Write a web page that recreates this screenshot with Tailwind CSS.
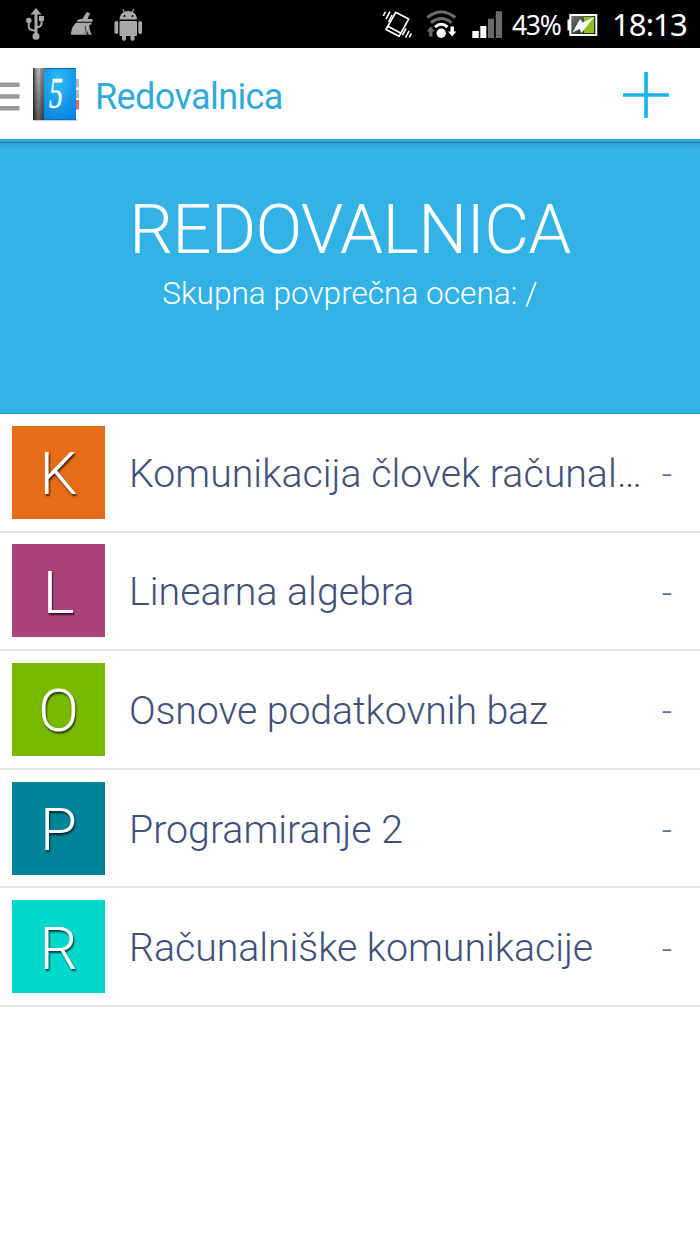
<!DOCTYPE html>
<html lang="sl">
<head>
<meta charset="UTF-8">
<meta name="viewport" content="width=device-width, initial-scale=1.0">
<title>Redovalnica</title>
<script src="https://cdn.jsdelivr.net/npm/@tailwindcss/browser@4"></script>
</head>
<body class="bg-white font-['Roboto',sans-serif] w-[700px] h-[1244px] overflow-hidden">

<!-- status bar -->
<div class="h-12 bg-black flex items-center justify-between text-white">
    <svg class="w-[160px] h-12" viewBox="0 0 160 48" fill="#a9a9a9">
        <!-- usb -->
        <path d="M36 8l5.500 6.500h-4V33h-3V14.500h-4z"/>
        <circle cx="36" cy="36.300" r="3.500"/>
        <circle cx="28.800" cy="20.500" r="2.800"/>
        <rect x="39" y="16" width="5" height="5"/>
        <path d="M28.800 21v5.500q0 4 7.200 4.300M41.500 20v4q0 3-5.500 3.300" fill="none" stroke="#a9a9a9" stroke-width="2"/>
        <!-- broom -->
        <path d="M71 34.700c.3-5.500 2-10 5.500-11.900h15v1.500l-2.200.7c0 3 .7 6.500 2.400 9.700h-3l-1.200-4-.5 4z"/>
        <path d="M76.500 21.800c1-2 3-3 6-3l4.300-6.800 3.200 1.200-2.400 5.800h5v2.800z"/>
        <path d="M85.300 25.500l.8 9" stroke="#000" stroke-width=".6"/>
        <!-- android -->
        <path d="M119.500 19.500c0-3.700 2-6 4.200-7.200L122.300 9.500l1-.5 1.600 2.700c2-.8 4.800-.8 6.800 0L133.300 9l1 .5-1.500 2.800c2.300 1.200 4.200 3.500 4.200 7.200z"/>
        <circle cx="124.500" cy="16" r="1" fill="#000"/>
        <circle cx="132.500" cy="16" r="1" fill="#000"/>
        <rect x="119.500" y="21" width="17.500" height="15" rx="1"/>
        <rect x="114.500" y="21" width="3.700" height="13" rx="1.800"/>
        <rect x="138.300" y="21" width="3.700" height="13" rx="1.800"/>
        <rect x="122" y="32" width="4" height="8.800" rx="1.800"/>
        <rect x="130.500" y="32" width="4" height="8.800" rx="1.800"/>
    </svg>
    <div class="flex items-center pr-3 font-['Noto_Sans',sans-serif]">
        <svg class="w-[132px] h-12" viewBox="380 0 132 48" fill="none">
            <!-- vibrate -->
            <path d="M395.700 12.300l13 6.800-9.700 17.200-13-6.800z" stroke="#fff" stroke-width="1.700" stroke-linejoin="round"/>
            <path d="M387.800 26.300l12.800 6.700M383.300 16l2-4.200M386 19l4-7.500M388.500 22l3.500-7M402.500 35l3.500-6.500M405.500 37.500l3.500-6.500M409.300 37.500l2-4.200" stroke="#fff" stroke-width="1.600"/>
            <!-- wifi -->
            <g stroke-width="3">
                <path d="M427.300 17.500q14-11 28 0M431 22.800q10.200-8.500 20.500 0" stroke="#6b6b6b"/>
                <path d="M435 27q6.200-5.500 12.500 0" stroke="#fff"/>
            </g>
            <circle cx="441.200" cy="33.300" r="4.700" fill="#fff"/>
            <path d="M430.800 26.500l4.200 5h-2.500V36.500h-3.400v-5h-2.500z" fill="#6b6b6b"/>
            <path d="M452.200 36.500l-4.200-5h2.500V26.500h3.400v5h2.500z" fill="#fff"/>
            <!-- signal -->
            <path d="M472.300 31h6.500v7h-6.500zM480.300 26h6v12h-6z" fill="#fff"/>
            <path d="M488 18.700h6V38h-6zM495.800 11.300h6.200V38h-6.200z" fill="#6b6b6b"/>
        </svg>
        <span class="w-[55px] pt-0.5 text-[26.500px] leading-none tracking-[-1.300px]">43%</span>
        <svg class="w-[45px] h-12" viewBox="567 0 45 48">
            <defs>
                <linearGradient id="bat" x1="0" y1="0" x2="1" y2="1">
                    <stop offset="0" stop-color="#777"/>
                    <stop offset="1" stop-color="#111"/>
                </linearGradient>
            </defs>
            <path d="M567.500 19.500h3v11h-3z" fill="#fff"/>
            <rect x="570.300" y="15" width="26" height="20" fill="url(#bat)" stroke="#fff" stroke-width="2"/>
            <path d="M584 17h10v16h-10z" fill="#8cc11f"/>
            <path d="M594 17l-11 5.500-3-3.500-7.500 13.500 7-3.500 2 4z" fill="#fff"/>
        </svg>
        <span class="w-[76px] text-[31px] leading-none tracking-[-0.900px] whitespace-nowrap">18:13</span>
    </div>
</div>

<!-- action bar -->
<header class="h-[91px] flex items-center">
    <svg class="w-[95px] h-[91px]" viewBox="0 48 95 91">
        <defs>
            <linearGradient id="spine">
                <stop offset="0" stop-color="#222"/>
                <stop offset=".2" stop-color="#888"/>
                <stop offset=".5" stop-color="#bbb"/>
                <stop offset=".7" stop-color="#888"/>
                <stop offset="1" stop-color="#777"/>
            </linearGradient>
            <linearGradient id="shade" x1="0" y1="0" x2="0" y2="1">
                <stop offset="0" stop-color="#000" stop-opacity="0"/>
                <stop offset="1" stop-color="#000" stop-opacity=".5"/>
            </linearGradient>
            <radialGradient id="cover" cx=".45" cy=".25" r=".8">
                <stop offset="0" stop-color="#2fbcf6"/>
                <stop offset="1" stop-color="#0584e4"/>
            </radialGradient>
        </defs>
        <path d="M0 82.500h19.500V87H0zM0 94.300h19.500v4.500H0zM0 106h19.500v4.600H0z" fill="#999"/>
        <path d="M75 79h4v8.500h-4zM75 90h4v8h-4z" fill="#b5b5b5"/>
        <path d="M75 100h4v9.500h-4z" fill="#f0616d"/>
        <rect x="33" y="119" width="44" height="2" fill="#ccc"/>
        <rect x="33" y="68" width="12" height="52" rx="1" fill="url(#spine)"/>
        <rect x="33" y="68" width="12" height="52" rx="1" fill="url(#shade)"/>
        <rect x="44" y="68" width="32" height="52" rx="1" fill="url(#cover)"/>
        <path d="M44 68.500h32M44 119.500h32" stroke="#0a6cba"/>
        <text transform="translate(49 108) scale(.62 1)" font-family="Liberation Serif, serif" font-style="italic" font-size="45" fill="#fff" stroke="#fff" stroke-width=".4">5</text>
    </svg>
    <h1 class="grow text-[36px] leading-none tracking-[-0.600px] text-[#33a9d8] pt-1.5">Redovalnica</h1>
    <svg class="w-[46px] h-[46px] mr-[31.500px] mt-0.5" viewBox="0 0 46 46" stroke="#1cb5e9" stroke-width="3.700">
        <path d="M0 23h46M23 0v46"/>
    </svg>
</header>

<!-- average -->
<section class="h-[275px] bg-[#33b3e5] border-b border-[#1aa5d8] text-white text-center">
    <div class="h-[3px] bg-[#2aafe0]"></div>
    <div class="h-px bg-[#2385aa]"></div>
    <div class="h-2 bg-linear-to-b from-[#2fa3d0] to-[#33b3e5]"></div>
    <h2 class="pt-[44px] text-[69px] leading-[69px] tracking-[-0.700px] font-light">REDOVALNICA</h2>
    <p class="pt-[12px] text-[31.600px] leading-[36px] font-light">Skupna povprečna ocena: /</p>
</section>

<!-- subjects -->
<ul class="text-[39.300px] font-light text-[#3f5079] whitespace-nowrap">
    <li class="h-[118.600px] border-b-2 border-[#e2e2e2] flex items-center px-3">
        <span class="size-[93px] pt-1 bg-[#e66c18] text-white text-[60px] flex items-center justify-center text-shadow-[1px_2px_2px_rgb(0_0_0/0.7)]">K</span>
        <span class="ml-6 pt-1">Komunikacija človek računal…</span>
        <span class="ml-auto pr-4 pt-1.5 text-[36px] text-[#66738f]">-</span>
    </li>
    <li class="h-[118.600px] border-b-2 border-[#e2e2e2] flex items-center px-3">
        <span class="size-[93px] pt-1 bg-[#a94278] text-white text-[60px] flex items-center justify-center text-shadow-[1px_2px_2px_rgb(0_0_0/0.7)]">L</span>
        <span class="ml-6 pt-1">Linearna algebra</span>
        <span class="ml-auto pr-4 pt-1.5 text-[36px] text-[#66738f]">-</span>
    </li>
    <li class="h-[118.600px] border-b-2 border-[#e2e2e2] flex items-center px-3">
        <span class="size-[93px] pt-1 bg-[#78b900] text-white text-[60px] flex items-center justify-center text-shadow-[1px_2px_2px_rgb(0_0_0/0.7)]">O</span>
        <span class="ml-6 pt-1 tracking-[-0.100px]">Osnove podatkovnih baz</span>
        <span class="ml-auto pr-4 pt-1.5 text-[36px] text-[#66738f]">-</span>
    </li>
    <li class="h-[118.600px] border-b-2 border-[#e2e2e2] flex items-center px-3">
        <span class="size-[93px] pt-1 bg-[#008299] text-white text-[60px] flex items-center justify-center text-shadow-[1px_2px_2px_rgb(0_0_0/0.7)]">P</span>
        <span class="ml-6 pt-1">Programiranje 2</span>
        <span class="ml-auto pr-4 pt-1.5 text-[36px] text-[#66738f]">-</span>
    </li>
    <li class="h-[118.600px] border-b-2 border-[#e2e2e2] flex items-center px-3">
        <span class="size-[93px] pt-1 bg-[#00d8cc] text-white text-[60px] flex items-center justify-center text-shadow-[1px_2px_2px_rgb(0_0_0/0.7)]">R</span>
        <span class="ml-6 pt-1 tracking-[-0.050px]">Računalniške komunikacije</span>
        <span class="ml-auto pr-4 pt-1.5 text-[36px] text-[#66738f]">-</span>
    </li>
</ul>
</body>
</html>
